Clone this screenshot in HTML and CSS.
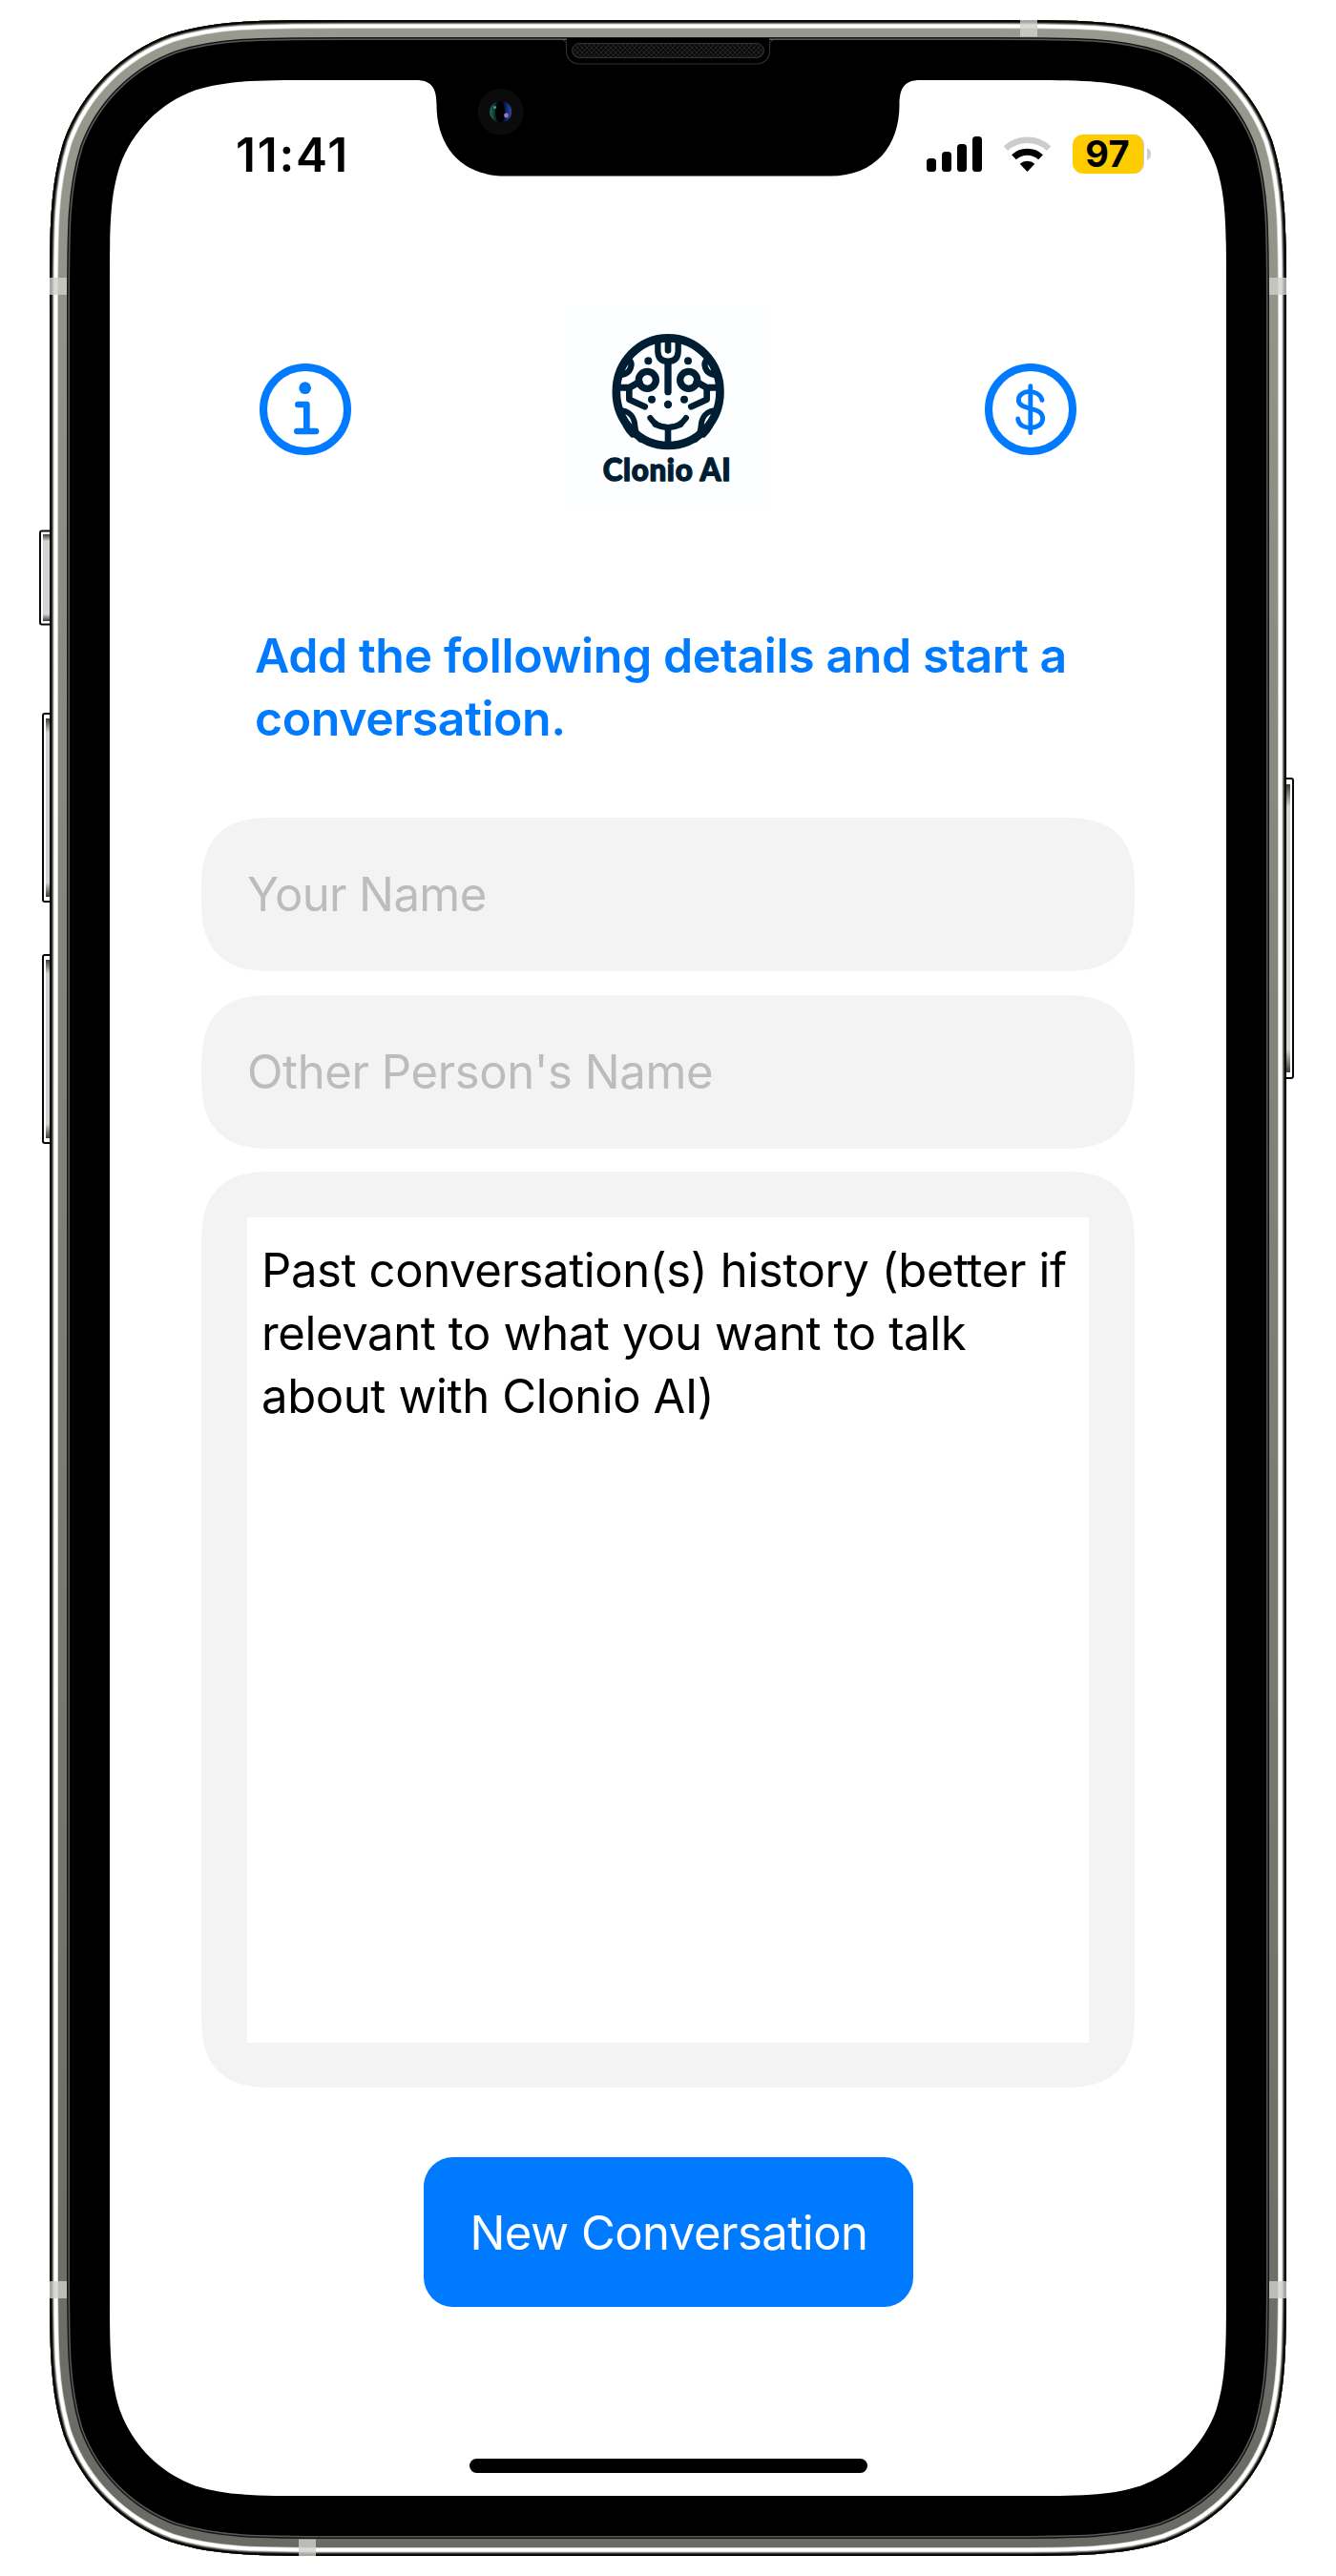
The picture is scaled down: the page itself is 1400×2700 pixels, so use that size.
FILE: index.html
```html
<!DOCTYPE html>
<html lang="en">
<head>
<meta charset="utf-8">
<title>Clonio AI</title>
<link rel="stylesheet" href="styles.css">
</head>
<body>
<div class="phone">
  <svg class="frame" viewBox="0 0 1400 2700" aria-hidden="true">
    <defs>
      <linearGradient id="metal" x1="0" y1="21" x2="0" y2="2679" gradientUnits="userSpaceOnUse">
        <stop offset="0" stop-color="#98998f"/><stop offset=".4" stop-color="#828379"/><stop offset="1" stop-color="#696a63"/>
      </linearGradient>
      <linearGradient id="key" x1="0" y1="0" x2="0" y2="1">
        <stop offset="0" stop-color="#3c3e38"/><stop offset=".08" stop-color="#d4d5d2"/><stop offset=".92" stop-color="#d4d5d2"/><stop offset="1" stop-color="#3c3e38"/>
      </linearGradient>
      <linearGradient id="lens" x1="0" x2="1">
        <stop offset="0" stop-color="#17705f"/><stop offset=".4" stop-color="#020506"/><stop offset=".6" stop-color="#030720"/><stop offset=".85" stop-color="#123a94"/><stop offset="1" stop-color="#403f80"/>
      </linearGradient>
      <pattern id="mesh" width="5" height="5" patternUnits="userSpaceOnUse">
        <rect width="5" height="5" fill="#0b0b0b"/><path d="M0 0l5 5M5 0l-5 5" stroke="#2d2d2d" stroke-width=".8"/>
      </pattern>
      <path id="body" d="M357.7 21H1042.3c88 0 132 0 179.4 15c51.7 18.8 92.5 59.6 111.3 111.3c15 47.4 15 91.4 15 179.4V2373.3c0 88 0 132 -15 179.4c-18.8 51.7 -59.6 92.5 -111.3 111.3c-47.4 15 -91.4 15 -179.4 15H357.7c-88 0 -132 0 -179.4 -15c-51.7 -18.8 -92.5 -59.6 -111.3 -111.3c-15 -47.4 -15 -91.4 -15 -179.4V326.7c0 -88 0 -132 15 -179.4c18.8 -51.7 59.6 -92.5 111.3 -111.3c47.4 -15 91.4 -15 179.4 -15z"/>
      <clipPath id="bodyClip"><use href="#body"/></clipPath>
    </defs>

    <!-- side keys -->
    <g stroke="#080908" stroke-width="2" fill="#fff">
      <rect x="42" y="556.500" width="20" height="98" rx="2"/>
      <rect x="45" y="748" width="20" height="197" rx="2"/>
      <rect x="45" y="1001" width="20" height="197" rx="2"/>
      <rect x="1335" y="816" width="20" height="314" rx="2"/>
    </g>
    <g fill="url(#key)">
      <rect x="45" y="560" width="8" height="91"/>
      <rect x="48" y="753" width="5" height="187"/>
      <rect x="48" y="1006" width="5" height="187"/>
      <rect x="1347" y="822" width="5" height="302"/>
    </g>

    <!-- metal rim and bezel -->
    <use href="#body"/>
    <g clip-path="url(#bodyClip)" fill="none">
      <use href="#body" stroke="#575757" stroke-width="42"/>
      <use href="#body" stroke="#161616" stroke-width="39"/>
      <use href="#body" stroke="url(#metal)" stroke-width="36"/>
      <use href="#body" stroke="#c9cac5" stroke-width="18"/>
      <use href="#body" stroke="#fff" stroke-width="16.500"/>
      <use href="#body" stroke="#bfc0ba" stroke-width="9"/>
      <use href="#body" stroke="#6f7068" stroke-width="7.400"/>
      <use href="#body" stroke="#22241f" stroke-width="5.400"/>
      <use href="#body" stroke="#030503" stroke-width="3.600"/>
    </g>
    <g fill="#d0d1cc" fill-opacity=".8">
      <rect x="52" y="291" width="18" height="18"/><rect x="1330" y="291" width="18" height="18"/>
      <rect x="52" y="2391" width="18" height="18"/><rect x="1330" y="2391" width="18" height="18"/>
      <rect x="1069" y="21" width="18" height="17.500"/><rect x="313" y="2661.500" width="18" height="17.500"/>
    </g>

    <!-- display -->
    <path fill="#fff" d="M332.100 84H1067.900c62.500 0 93.800 0 127.400 10.600c36.800 13.400 65.700 42.300 79.100 79.100c10.600 33.600 10.600 64.900 10.600 127.400V2398.900c0 62.500 0 93.800 -10.600 127.400c-13.400 36.800 -42.300 65.700 -79.100 79.100c-33.600 10.600 -64.900 10.600 -127.400 10.600H332.100c-62.500 0 -93.800 0 -127.400 -10.600c-36.800 -13.400 -65.700 -42.300 -79.100 -79.100c-10.600 -33.600 -10.600 -64.900 -10.600 -127.400V301.100c0 -62.500 0 -93.800 10.600 -127.400c13.400 -36.800 42.300 -65.700 79.100 -79.100c33.600 -10.600 64.900 -10.600 127.400 -10.600z"/>
    <path d="M436 80V84C452 84 457.500 92 457.500 110C457.500 153 483 184.500 530 184.500H870C917 184.500 942.500 153 942.500 110C942.500 92 948 84 964 84V80z"/>

    <!-- earpiece and camera -->
    <path d="M594 40H806V54a13 13 0 0 1-13 13H607a13 13 0 0 1-13-13z"/>
    <path d="M590 42.500q3.500 0 3.500 4V54a13 13 0 0 0 13 13H793.500a13 13 0 0 0 13-13V46.500q0-4 3.500-4" fill="none" stroke="#303030" stroke-width="1.200"/>
    <rect x="599.500" y="45.500" width="201" height="15" rx="7.500" fill="url(#mesh)" stroke="#343434"/>
    <ellipse cx="524.700" cy="117.200" rx="24" ry="24.300" fill="#0b0b0c"/>
    <circle cx="524.700" cy="117.200" r="11.500" fill="url(#lens)"/>
    <ellipse cx="524" cy="117.200" rx="5" ry="11" fill="#000"/>
    <circle cx="518.500" cy="112.500" r="1.500" fill="#4d99a3"/><circle cx="530.500" cy="121" r="2.400" fill="#9a78b8"/>
  </svg>

  <main class="screen">
    <div class="status">
      <span class="time">11:41</span>
      <div class="indicators">
        <svg width="58" height="37" viewBox="971 143 58 37"><rect x="971" y="166" width="10" height="14" rx="3.500"/><rect x="987" y="159" width="10" height="21" rx="3.500"/><rect x="1003" y="151" width="10" height="29" rx="3.500"/><rect x="1019" y="143" width="10" height="37" rx="3.500"/></svg>
        <svg class="wifi" width="51" height="37" viewBox="1051 143 51 37">
          <g fill="none"><path d="M1053.900 155.700a33.200 33.200 0 0 1 45.200 0" stroke="#ccc" stroke-width="6.500"/><path d="M1062.500 164.800a20.500 20.500 0 0 1 28 0" stroke="#000" stroke-width="7"/></g>
          <path d="M1076.500 180l-7.800-8.200a11.500 11.500 0 0 1 15.600 0z"/>
        </svg>
        <span class="battery">97</span>
        <svg class="nub" width="4" height="13" viewBox="0 0 4 13"><path d="M0 0q4 2 4 6.500t-4 6.500z" fill="#ccc"/></svg>
      </div>
    </div>

    <header class="header">
      <svg class="round" viewBox="36 32 288 288" role="img" aria-label="Info">
        <circle cx="180" cy="176" r="132" fill="none" stroke="#007aff" stroke-width="24"/>
        <circle cx="179" cy="109" r="19" fill="#007aff"/>
        <path d="M157 161H184V245M154 245H213" fill="none" stroke="#007aff" stroke-width="20" stroke-linecap="round" stroke-linejoin="round"/>
      </svg>
      <svg class="logo" viewBox="6 33 648 648" role="img" aria-label="Clonio AI">
        <g fill="none" stroke="#001e33" stroke-linecap="round" stroke-linejoin="round">
          <ellipse cx="330.500" cy="302" rx="163" ry="169" stroke-width="26"/>
          <path d="M330 144V172" stroke-width="20"/>
          <path d="M298 146V176Q300 206 330 206Q360 206 362 176V146" stroke-width="19"/>
          <path d="M330 210V302" stroke-width="22"/>
          <path d="M274 384C300 424 360 424 387 384" stroke-width="18"/>
          <path d="M290 405Q330 423 370 405" stroke-width="18"/>
          <path d="M330 420V470" stroke-width="20"/>
          <g id="half">
            <circle cx="265" cy="265" r="27" stroke-width="22"/>
            <path d="M240 271L208 289H175" stroke-width="21"/>
            <path d="M208 294V326L257 349" stroke-width="20"/>
            <path d="M205 200C224 214 212 244 184 249" stroke-width="19"/>
            <path d="M200 213Q190 222 190 234" stroke-width="10"/>
            <path d="M178 361C207 361 224 380 226 408Q228 436 243 452" stroke-width="18"/>
            <path d="M186 376Q192 414 218 438" stroke-width="16"/>
          </g>
          <use href="#half" transform="matrix(-1 0 0 1 660 0)"/>
        </g>
        <g fill="#001e33">
          <circle cx="268" cy="205" r="12"/><circle cx="393" cy="205" r="12"/><circle cx="279" cy="326" r="12"/><circle cx="381" cy="326" r="12"/><circle cx="330" cy="342" r="12.500"/>
        </g>
        <text class="wordmark" x="125" y="583" textLength="402" lengthAdjust="spacing">Clonio AI</text>
      </svg>
      <svg class="round" viewBox="36 32 288 288" role="img" aria-label="Pricing">
        <circle cx="180" cy="176" r="132" fill="none" stroke="#007aff" stroke-width="24"/>
        <path d="M179.500 103V250M216 147C207 110 142 112 142 147C142 182 218 164 218 205C218 241 144 246 140 206" fill="none" stroke="#007aff" stroke-width="14.500" stroke-linecap="round"/>
      </svg>
    </header>

    <h1 class="title">Add the following details and start a conversation.</h1>

    <form class="form">
      <input class="field name" type="text" placeholder="Your Name">
      <input class="field other" type="text" placeholder="Other Person's Name">
      <div class="field history">
        <div class="editor"><span class="l1">Past conversation(s) history (better if</span><br><span class="l2">relevant to what you want to talk</span><br><span class="l3">about with Clonio AI)</span></div>
      </div>
      <button class="submit" type="button">New Conversation</button>
    </form>
    <div class="home"></div>
  </main>
</div>
</body>
</html>
```
FILE: styles.css
```css
* { box-sizing: border-box; }
body { margin: 0; background: #fff; font-family: Inter, "Liberation Sans", sans-serif; }
svg { display: block; flex: none; }

.phone { position: relative; width: 1400px; height: 2700px; overflow: hidden; padding: 84px 115px; }
.frame { position: absolute; top: 0; left: 0; width: 1400px; height: 2700px; }
.screen { position: relative; display: flex; flex-direction: column; height: 2532px; }

.status { display: flex; justify-content: space-between; height: 237px; padding: 46px 79px 0 132px; }
.time { font-size: 49.500px; font-weight: 600; line-height: 64px; letter-spacing: 1.8px; }
.indicators { display: flex; align-items: center; height: 63px; }
.wifi { margin-left: 22px; }
.battery { width: 75px; height: 41px; margin-left: 22px; padding-right: 1px; border-right: 1px solid #ccc; border-radius: 11px; background: #ffcc00; font-size: 38px; font-weight: 650; line-height: 41px; text-align: center; letter-spacing: .3px; }
.nub { margin-left: 3px; }

.header { display: flex; align-items: center; justify-content: space-between; height: 216px; padding: 0 157px; }
.round { width: 96px; height: 96px; }
.logo { width: 216px; height: 216px; background: #fdfeff; }
.wordmark { font-family: Lato, sans-serif; font-size: 94px; font-weight: 900; fill: #001e33; stroke: #001e33; stroke-width: 4px; stroke-linejoin: round; }

.title { margin: 117px 0 0; padding: 0 140px 0 152px; color: #007aff; font-size: 50px; font-weight: 600; line-height: 66px; letter-spacing: -.4px; }

.form { display: flex; flex-direction: column; margin: 71px 96px 0; }
.field { border: 0; border-radius: 60px; background: #f3f3f3; }
@supports (corner-shape: squircle) {
  .field { border-radius: 78px; corner-shape: superellipse(1.45); }
}
.name, .other { height: 161px; margin-bottom: 25px; padding: 0 48px; color: #000; font-family: inherit; font-size: 49px; letter-spacing: -.4px; }
.name { letter-spacing: -.6px; }
.field::placeholder { color: #bcbcbc; opacity: 1; }
.history { height: 960px; padding: 48px; margin-top: -1px; }
.editor { height: 865px; padding: 23px 0 0 15px; background: #fff; font-size: 49px; line-height: 66px; letter-spacing: -.38px; white-space: nowrap; }
.submit { align-self: center; width: 513px; height: 157px; margin: 73px 0 0; padding: 1px 0 0 2px; border: 0; border-radius: 31px; background: #007aff; color: #fff; font-family: inherit; font-size: 49px; letter-spacing: -.5px; white-space: nowrap; }

.home { width: 417px; height: 15px; margin: auto auto 24px; border-radius: 8px; background: #000; }
```
